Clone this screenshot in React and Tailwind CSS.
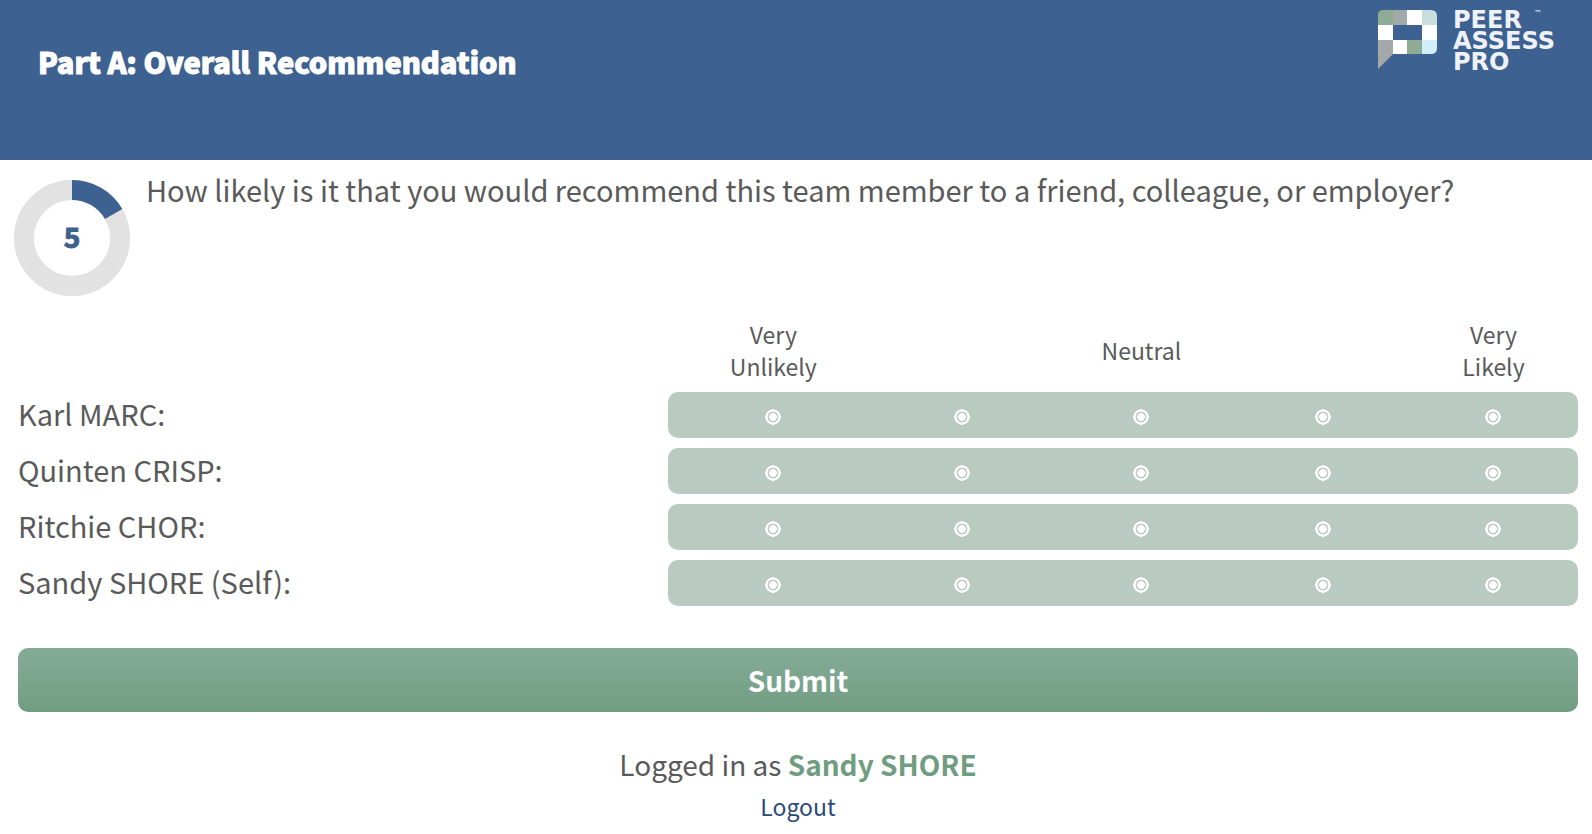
import { useState } from "react";

const MEMBERS = [
  { id: "karl", name: "Karl MARC" },
  { id: "quinten", name: "Quinten CRISP" },
  { id: "ritchie", name: "Ritchie CHOR" },
  { id: "sandy", name: "Sandy SHORE (Self)" },
];

const SCALE = [
  { value: 1, lines: ["Very", "Unlikely"], col: "w-[13.5%]" },
  { value: 2, lines: [], col: "w-[10.7%]" },
  { value: 3, lines: ["Neutral"], col: "w-[12.3%]" },
  { value: 4, lines: [], col: "w-[11%]" },
  { value: 5, lines: ["Very", "Likely"], col: "" },
];

// Dot and ring are both drawn by the gradient, in the current text colour.
const RADIO_CLASS =
  "mx-auto mt-[3px] block size-4 cursor-pointer appearance-none rounded-full text-white " +
  "bg-[radial-gradient(closest-side,currentColor_44%,transparent_54%,transparent_62%,currentColor_72%,currentColor_94%,transparent)] " +
  "checked:text-[#3d6190] focus:outline-none focus-visible:ring-2 focus-visible:ring-[#3d6190]";

function Logo() {
  return (
    <svg
      viewBox="0 0 200 60"
      className="h-[60px] w-[200px] shrink-0 overflow-visible"
      role="img"
      aria-label="Peer Assess Pro"
    >
      <defs>
        <clipPath id="bubble">
          <path d="M5 0H53Q59 0 59 6V38Q59 44 53 44H15L0 59V5Q0 0 5 0Z" />
        </clipPath>
      </defs>
      <g clipPath="url(#bubble)">
        <rect width="15" height="15" fill="#8fab93" />
        <rect x="15" width="14" height="15" fill="#a3a8a8" />
        <rect x="29" width="15" height="15" fill="#fff" />
        <rect x="44" width="15" height="15" fill="#c8dedd" />
        <rect y="15" width="15" height="15" fill="#fff" />
        <rect x="44" y="15" width="15" height="15" fill="#fff" />
        <rect y="30" width="15" height="30" fill="#a3a8a8" />
        <rect x="15" y="30" width="14" height="15" fill="#fff" />
        <rect x="29" y="30" width="15" height="15" fill="#8fab93" />
        <rect x="44" y="30" width="15" height="15" fill="#d1effb" />
      </g>
      <g fill="#eef2f7" fontFamily="DejaVu Sans, sans-serif" fontSize="24" fontWeight="700">
        <text x="75" y="18">PEER</text>
        <text x="75" y="39">ASSESS</text>
        <text x="75" y="60">PRO</text>
        <text x="156" y="6" fontSize="8" fontWeight="400">™</text>
      </g>
    </svg>
  );
}

// Donut showing how far through the survey the current question is.
function ProgressRing({ current, total }) {
  const r = 48;
  const length = 2 * Math.PI * r;
  return (
    <svg viewBox="0 0 116 116" className="size-[116px] shrink-0" role="img" aria-label={`Question ${current}`}>
      <circle cx="58" cy="58" r={r} fill="none" stroke="#e2e2e2" strokeWidth="20" />
      <circle
        cx="58"
        cy="58"
        r={r}
        fill="none"
        stroke="#3d6190"
        strokeWidth="20"
        strokeDasharray={`${(length * current) / total} ${length}`}
        transform="rotate(-90 58 58)"
      />
      <text
        x="58"
        y="68"
        textAnchor="middle"
        fontSize="28"
        fontWeight="700"
        fill="#3d6190"
        stroke="#3d6190"
        strokeWidth="1"
      >
        {current}
      </text>
    </svg>
  );
}

export default function App() {
  const [ratings, setRatings] = useState({});

  return (
    <div className="min-h-screen bg-white font-['Noto_Sans_CJK_SC',sans-serif] text-[29px] text-[#5a5a5a]">
      <header className="flex min-h-40 items-start justify-between bg-[#3d6190] pt-2.5 pr-3.5 pl-[38px]">
        <h1 className="pt-7 leading-[46px] font-black text-white [-webkit-text-stroke:1px_white]">
          Part A: Overall Recommendation
        </h1>
        <Logo />
      </header>

      <main>
        <section className="flex items-start gap-4 px-3.5">
          <div className="pt-5">
            <ProgressRing current={5} total={30} />
          </div>
          <p className="pt-2 leading-[42px]">
            How likely is it that you would recommend this team member to a friend, colleague, or employer?
          </p>
        </section>

        <form className="pt-3 pr-3.5 pl-[18px]" onSubmit={(e) => e.preventDefault()}>
          <table className="w-full table-fixed border-separate border-spacing-x-0 border-spacing-y-[10px]">
            <colgroup>
              <col className="w-5/12" />
              {SCALE.map((s) => (
                <col key={s.value} className={s.col} />
              ))}
            </colgroup>
            <thead>
              <tr>
                <td />
                {SCALE.map((s) => (
                  <th key={s.value} scope="col" className="p-0 align-middle text-[23px] leading-8 font-normal">
                    {s.lines.map((line) => (
                      <span key={line} className="block">
                        {line}
                      </span>
                    ))}
                  </th>
                ))}
              </tr>
            </thead>
            <tbody>
              {MEMBERS.map((m) => (
                <tr key={m.id} className="h-[46px]">
                  <th scope="row" className="p-0 text-left align-top leading-[42px] font-normal">
                    {m.name}:
                  </th>
                  {SCALE.map((s) => (
                    <td
                      key={s.value}
                      className="bg-[#b9cac0] p-0 align-middle nth-2:rounded-l-[10px] last:rounded-r-[10px]"
                    >
                      <input
                        type="radio"
                        name={m.id}
                        value={s.value}
                        checked={ratings[m.id] === s.value}
                        onChange={() => setRatings((r) => ({ ...r, [m.id]: s.value }))}
                        aria-label={`${m.name}: ${s.value} of 5`}
                        className={RADIO_CLASS}
                      />
                    </td>
                  ))}
                </tr>
              ))}
            </tbody>
          </table>

          <button
            type="submit"
            className="mt-8 block h-16 w-full cursor-pointer rounded-[10px] bg-linear-to-b from-[#84ab96] via-[#77a189] via-75% to-[#709d80] text-[28px] leading-[64px] font-bold text-white"
          >
            Submit
          </button>
        </form>
      </main>

      <footer className="pt-7 pr-3.5 pl-[18px] text-center">
        <p className="text-[28px] leading-[48px]">
          Logged in as <strong className="font-bold text-[#709d80]">Sandy SHORE</strong>
        </p>
        <a href="#logout" className="block text-[23px] leading-9 text-[#2a4a78]">
          Logout
        </a>
      </footer>
    </div>
  );
}
